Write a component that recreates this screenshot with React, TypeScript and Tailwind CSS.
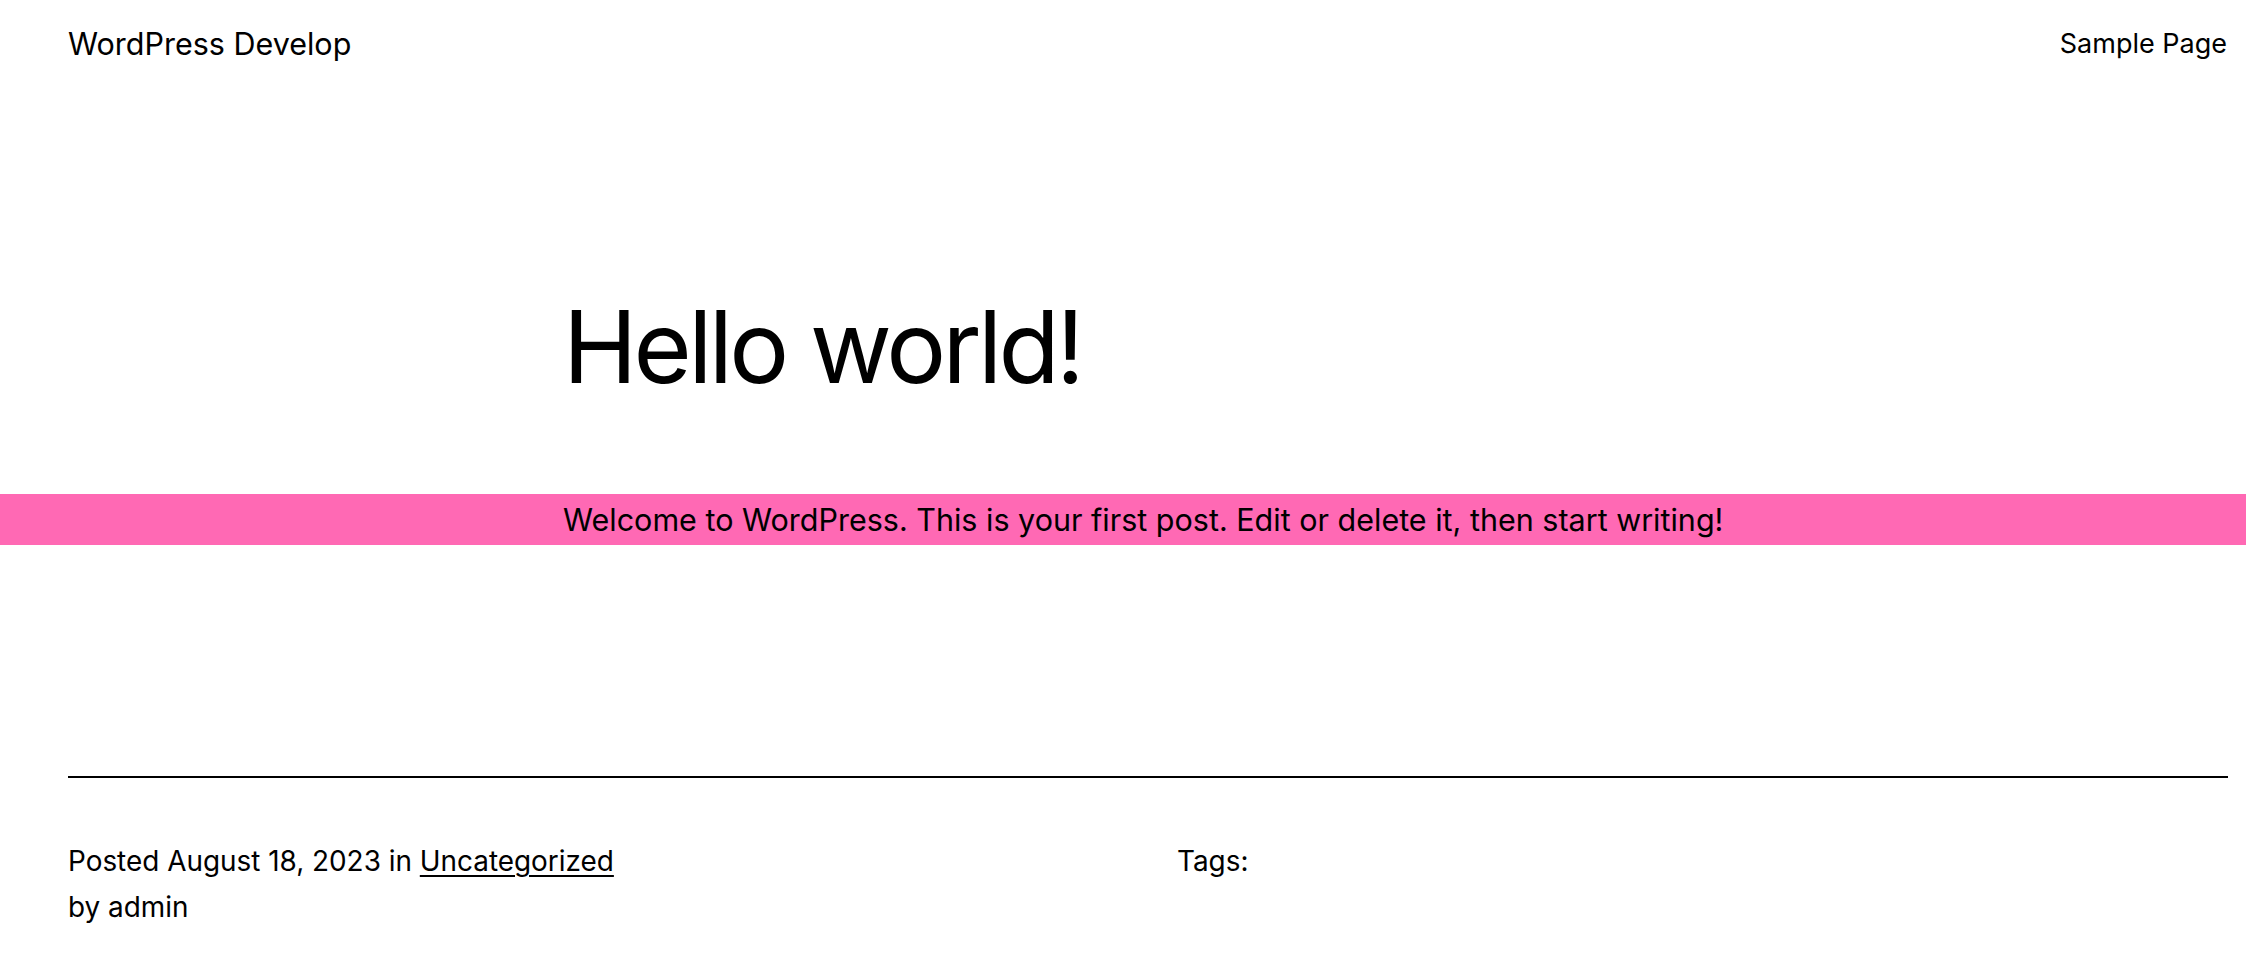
export default function App() {
  return (
    <div className="min-h-screen bg-white text-black font-['Inter',_'Liberation_Sans',_sans-serif]">
      {/* Site header */}
      <header className="flex items-start justify-between pl-[68px] pr-[19px] pt-[26px]">
        <a href="#" className="text-[30.5px] leading-[36px]">
          WordPress Develop
        </a>
        <nav className="text-[27px] leading-[36px]">
          <a href="#">Sample Page</a>
        </nav>
      </header>

      <main>
        {/* Post title */}
        <div className="pl-[68px] pr-[18px]">
          <h1 className="mx-auto mt-[230px] w-[1170px] text-[100px] font-normal leading-[110px] tracking-[-0.037em]">
            Hello world!
          </h1>
        </div>

        {/* Highlighted paragraph, full bleed */}
        <div className="mt-[92px] bg-[#ff69b4]">
          <div className="pl-[68px] pr-[18px]">
            <p className="mx-auto w-[1170px] text-[30.5px] leading-[51px]">
              Welcome to WordPress. This is your first post. Edit or delete it, then start writing!
            </p>
          </div>
        </div>

        {/* Post meta */}
        <div className="pl-[68px] pr-[18px]">
          <hr className="mt-[231px] h-[2px] border-0 bg-black" />
          <div className="mt-[60px] grid grid-cols-2 gap-x-[58px] text-[27.9px] leading-[46px]">
            <div>
              <p>
                Posted August 18, 2023 in{' '}
                <a href="#" className="underline underline-offset-[4px] decoration-[1.5px]">
                  Uncategorized
                </a>
              </p>
              <p>by admin</p>
            </div>
            <div>
              <p>Tags:</p>
            </div>
          </div>
        </div>
      </main>
    </div>
  );
}
